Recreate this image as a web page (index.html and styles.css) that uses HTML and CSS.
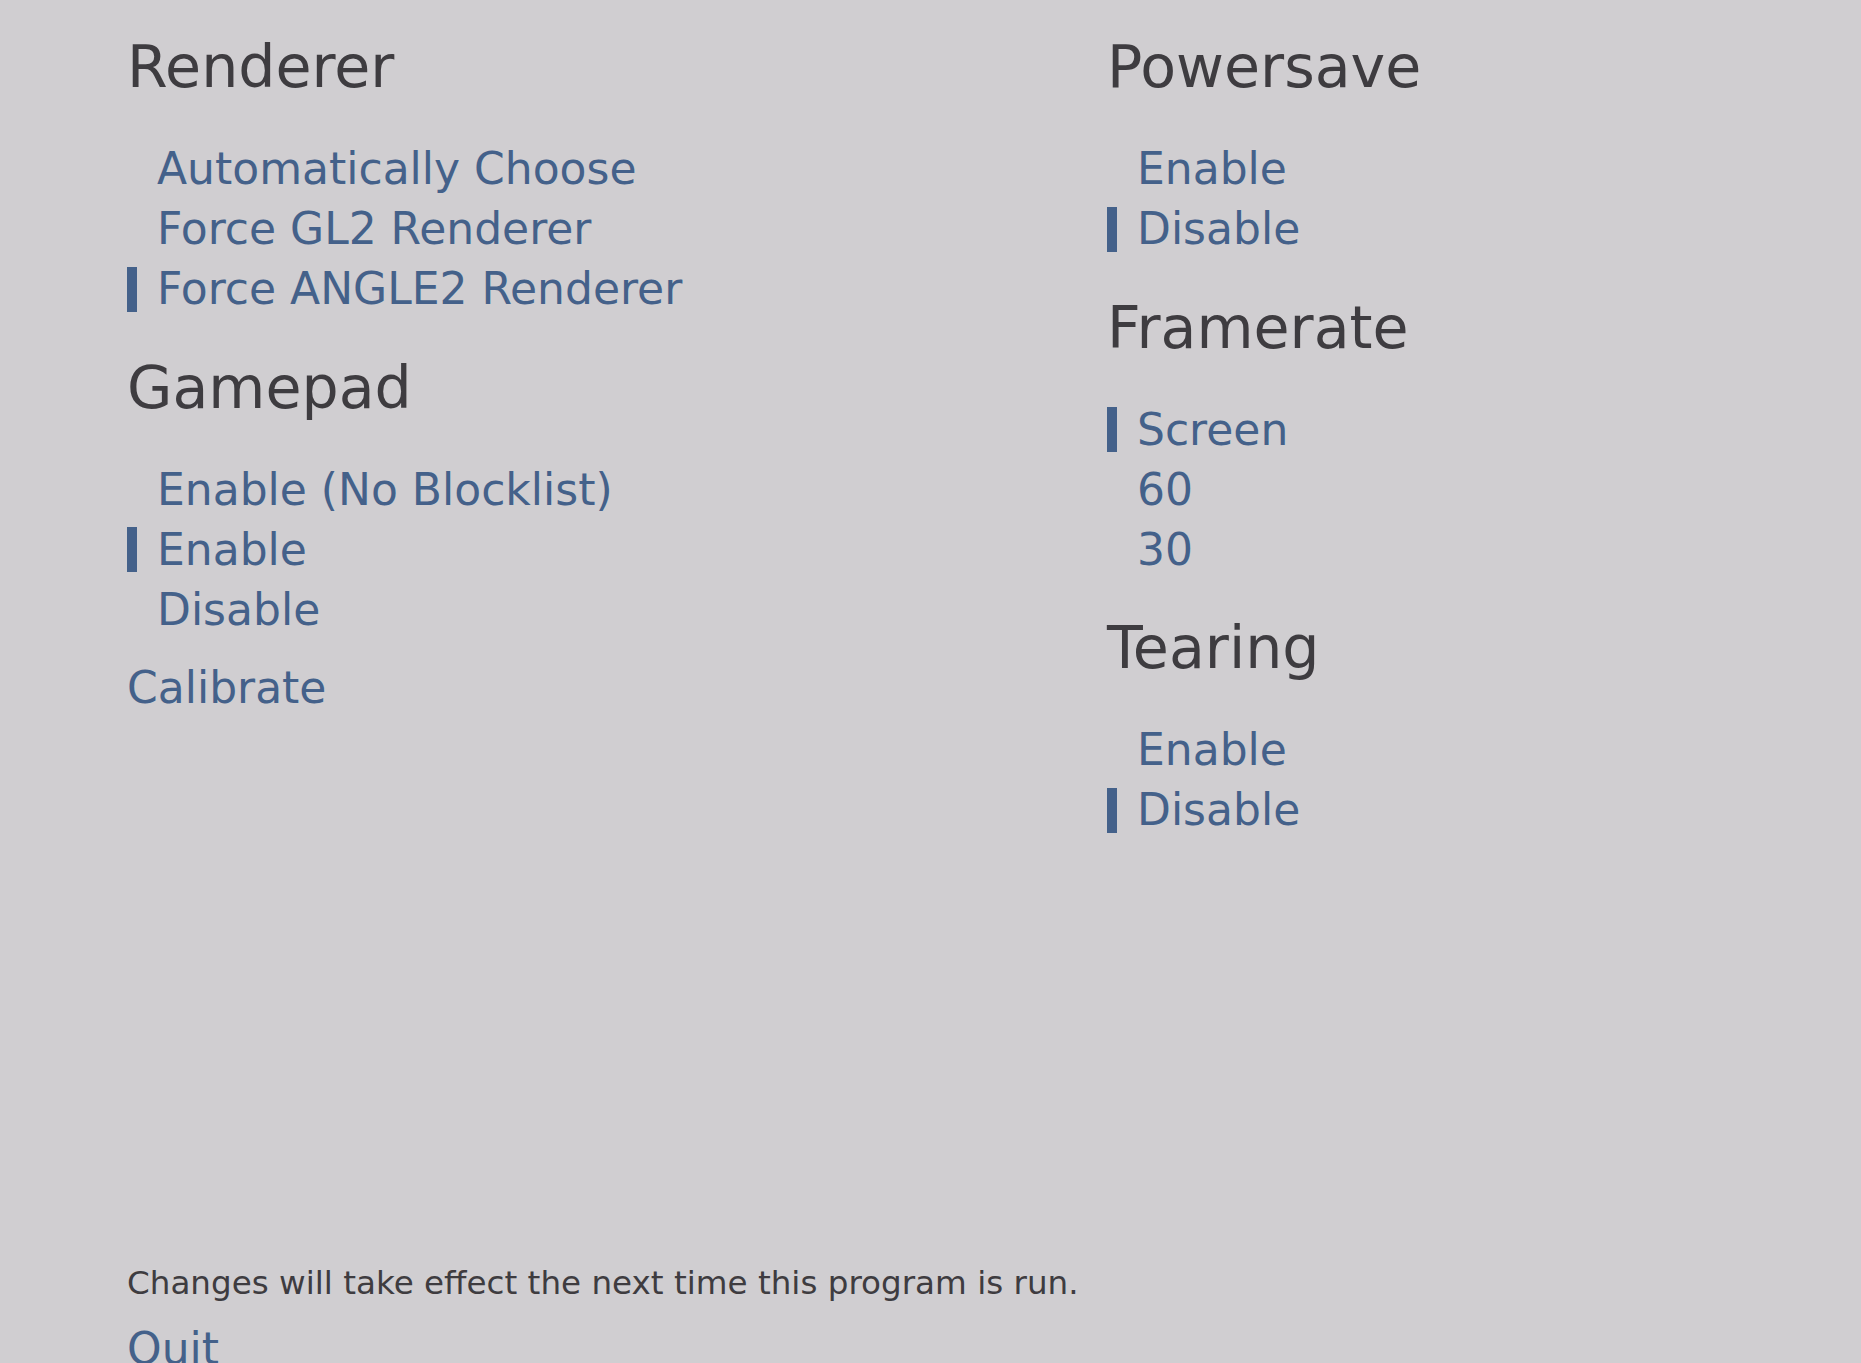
FILE: index.html
```html
<!DOCTYPE html>
<html>
<head>
<meta charset="utf-8">
<link rel="stylesheet" href="styles.css">
</head>
<body>
<div class="page">
  <div class="columns">
    <div class="column">
      <section class="group">
        <h2 class="heading">Renderer</h2>
        <ul class="options">
          <li class="option"><span class="marker"></span><span class="label">Automatically Choose</span></li>
          <li class="option"><span class="marker"></span><span class="label">Force GL2 Renderer</span></li>
          <li class="option selected"><span class="marker"></span><span class="label">Force ANGLE2 Renderer</span></li>
        </ul>
      </section>
      <section class="group">
        <h2 class="heading">Gamepad</h2>
        <ul class="options">
          <li class="option"><span class="marker"></span><span class="label">Enable (No Blocklist)</span></li>
          <li class="option selected"><span class="marker"></span><span class="label">Enable</span></li>
          <li class="option"><span class="marker"></span><span class="label">Disable</span></li>
        </ul>
        <div class="action calibrate">Calibrate</div>
      </section>
    </div>
    <div class="column">
      <section class="group">
        <h2 class="heading">Powersave</h2>
        <ul class="options">
          <li class="option"><span class="marker"></span><span class="label">Enable</span></li>
          <li class="option selected"><span class="marker"></span><span class="label">Disable</span></li>
        </ul>
      </section>
      <section class="group">
        <h2 class="heading">Framerate</h2>
        <ul class="options">
          <li class="option selected"><span class="marker"></span><span class="label">Screen</span></li>
          <li class="option"><span class="marker"></span><span class="label">60</span></li>
          <li class="option"><span class="marker"></span><span class="label">30</span></li>
        </ul>
      </section>
      <section class="group">
        <h2 class="heading">Tearing</h2>
        <ul class="options">
          <li class="option"><span class="marker"></span><span class="label">Enable</span></li>
          <li class="option selected"><span class="marker"></span><span class="label">Disable</span></li>
        </ul>
      </section>
    </div>
  </div>
  <footer class="footer">
    <p class="note">Changes will take effect the next time this program is run.</p>
    <div class="action">Quit</div>
  </footer>
</div>
</body>
</html>
```
FILE: styles.css
```css
html, body {
  margin: 0;
  padding: 0;
  background: #d0ced1;
}

body {
  font-family: "DejaVu Sans", "Liberation Sans", sans-serif;
  color: #3e3c40;
}

.page {
  display: flex;
  flex-direction: column;
  min-height: 1379px;
  box-sizing: border-box;
  padding: 33px 0 0 127px;
}

.columns {
  display: grid;
  grid-template-columns: 980px 1fr;
}

.column {
  display: flex;
  flex-direction: column;
  gap: 34.5px;
}

.heading {
  margin: 0 0 38px 0;
  font-size: 58.6px;
  line-height: 68px;
  font-weight: normal;
  color: #3e3c40;
}

.options {
  list-style: none;
  margin: 0;
  padding: 0;
}

.option {
  display: flex;
  align-items: center;
  height: 60px;
  font-size: 44px;
  line-height: 60px;
  color: #44618a;
}

.marker {
  width: 10px;
  height: 45px;
  margin-right: 20px;
  flex: none;
}

.option.selected .marker {
  background: #44618a;
}

.action {
  font-size: 44px;
  line-height: 60px;
  color: #44618a;
}

.calibrate {
  margin-top: 18.5px;
}

.footer {
  margin-top: auto;
}

.note {
  margin: 0 0 17px 0;
  font-size: 32.6px;
  line-height: 38px;
  color: #3e3c40;
}
```
